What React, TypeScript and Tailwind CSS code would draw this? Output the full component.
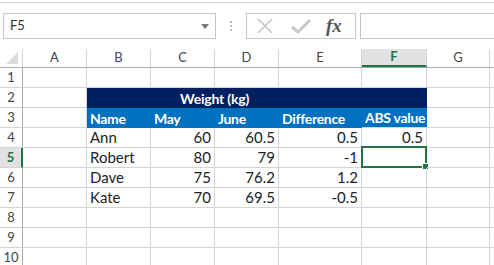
import React from 'react';

const cols = [
  { key: 'A', w: 'w-[64px]' },
  { key: 'B', w: 'w-[64px]' },
  { key: 'C', w: 'w-[64px]' },
  { key: 'D', w: 'w-[64px]' },
  { key: 'E', w: 'w-[83px]' },
  { key: 'F', w: 'w-[65px]' },
  { key: 'G', w: 'w-[63px]' },
];

type Cell = { text?: string; right?: boolean };

const data: Record<number, Cell[]> = {
  4: [{}, { text: 'Ann' }, { text: '60', right: true }, { text: '60.5', right: true }, { text: '0.5', right: true }, { text: '0.5', right: true }, {}],
  5: [{}, { text: 'Robert' }, { text: '80', right: true }, { text: '79', right: true }, { text: '-1', right: true }, {}, {}],
  6: [{}, { text: 'Dave' }, { text: '75', right: true }, { text: '76.2', right: true }, { text: '1.2', right: true }, {}, {}],
  7: [{}, { text: 'Kate' }, { text: '70', right: true }, { text: '69.5', right: true }, { text: '-0.5', right: true }, {}, {}],
};

const headers3 = ['Name', 'May', 'June', 'Difference', 'ABS value'];

const RowNum: React.FC<{ n: number }> = ({ n }) =>
  n === 5 ? (
    <div className="w-[23px] shrink-0 h-full flex items-center justify-center bg-[#e1e1e1] border-r-2 border-r-[#217346] border-b border-b-[#d4d4d4] text-[13px] font-bold text-[#217346]">
      {n}
    </div>
  ) : (
    <div className="w-[23px] shrink-0 h-full flex items-center justify-center border-r border-r-[#ababab] border-b border-b-[#d4d4d4] text-[13px] text-[#444]">
      {n}
    </div>
  );

export default function App() {
  return (
    <div className="w-[494px] h-[265px] overflow-hidden bg-white text-[#222]" style={{ fontFamily: 'Lato, "Liberation Sans", sans-serif' }}>
      {/* ribbon edge */}
      <div className="h-[3px] border-b border-[#d4d4d4]" />

      {/* formula bar */}
      <div className="flex items-center h-[26px] mt-[10px] pl-[3px]">
        <div className="w-[213px] h-[26px] border border-[#c6c6c6] flex items-center justify-between pl-[6px] pr-[6px] text-[13px] text-[#333]">
          <span>F5</span>
          <svg width="8" height="5" viewBox="0 0 8 5"><path d="M0 0h8L4 5z" fill="#777" /></svg>
        </div>
        <div className="w-[30px] flex flex-col items-center gap-[2px]">
          <span className="w-[2px] h-[2px] bg-[#bbb]" />
          <span className="w-[2px] h-[2px] bg-[#bbb]" />
          <span className="w-[2px] h-[2px] bg-[#bbb]" />
        </div>
        <div className="w-[110px] h-[26px] border border-[#c6c6c6] flex items-center">
          <svg className="ml-[9px]" width="18" height="16" viewBox="0 0 18 16">
            <path d="M2 1l14 14M16 1L2 15" stroke="#c8c8c8" strokeWidth="1.6" fill="none" />
          </svg>
          <svg className="ml-[17px]" width="20" height="16" viewBox="0 0 20 16">
            <path d="M1 9l6 5L19 2" stroke="#c8c8c8" strokeWidth="3" fill="none" />
          </svg>
          <span className="ml-[15px] text-[19px] italic font-bold text-[#555]" style={{ fontFamily: '"Liberation Serif", serif' }}>
            fx
          </span>
        </div>
        <div className="ml-[4px] flex-1 h-[26px] border border-[#c6c6c6] border-r-0" />
      </div>

      {/* column headers */}
      <div className="flex h-[19px] mt-[10px] border-b border-[#ababab]">
        <div className="w-[23px] shrink-0 h-full border-r border-[#d4d4d4] relative">
          <svg className="absolute right-[4px] bottom-[3px]" width="12" height="12" viewBox="0 0 12 12">
            <path d="M12 0v12H0z" fill="#dcdcdc" />
          </svg>
        </div>
        {cols.map((c) => (
          <div
            key={c.key}
            className={`${c.w} shrink-0 h-full flex items-center justify-center text-[13px] ${
              c.key === 'F'
                ? 'bg-[#e1e1e1] border-r border-r-[#d4d4d4] border-b-2 border-b-[#217346] font-bold text-[#217346] -mb-px h-[20px]'
                : 'border-r border-[#d4d4d4] text-[#444]'
            }`}
          >
            {c.key}
          </div>
        ))}
        <div className="flex-1" />
      </div>

      {/* rows */}
      <div className="text-[15px]">
        {Array.from({ length: 10 }, (_, i) => i + 1).map((n) => (
          <div key={n} className="flex h-[20px]">
            <RowNum n={n} />
            {n === 2 ? (
              <>
                <div className="w-[64px] shrink-0 h-full border-r border-b border-[#d4d4d4]" />
                <div className="w-[340px] shrink-0 h-full bg-[#002060] text-white font-bold flex items-center pl-[93px] text-[14px] tracking-[-0.2px]">
                  Weight (kg)
                </div>
                <div className="w-[63px] shrink-0 h-full border-r border-b border-[#d4d4d4]" />
              </>
            ) : n === 3 ? (
              <>
                <div className="w-[64px] shrink-0 h-full border-r border-b border-[#d4d4d4]" />
                {headers3.map((h, j) => (
                  <div
                    key={h}
                    className={`${cols[j + 1].w} shrink-0 h-full bg-[#0070c0] text-white font-bold flex items-center pl-[3px] whitespace-nowrap text-[14px] tracking-[-0.3px] ${
                      j === 4 ? 'border-b border-[#d4d4d4]' : ''
                    }`}
                  >
                    {h}
                  </div>
                ))}
                <div className="w-[63px] shrink-0 h-full border-r border-b border-[#d4d4d4]" />
              </>
            ) : (
              cols.map((c, j) => {
                const cell = data[n]?.[j] ?? {};
                return (
                  <div
                    key={c.key}
                    className={`${c.w} shrink-0 h-full border-r border-b border-[#d4d4d4] flex items-center px-[3px] relative ${
                      cell.right ? 'justify-end' : ''
                    }`}
                  >
                    {cell.text}
                    {n === 5 && c.key === 'F' && (
                      <div className="absolute -left-px -top-[2px] w-[66px] h-[22px] border-2 border-[#217346]">
                        <span className="absolute -right-[4px] -bottom-[4px] w-[7px] h-[7px] bg-[#217346] border border-white" />
                      </div>
                    )}
                  </div>
                );
              })
            )}
            <div className="flex-1 border-b border-[#d4d4d4]" />
          </div>
        ))}
      </div>
    </div>
  );
}
